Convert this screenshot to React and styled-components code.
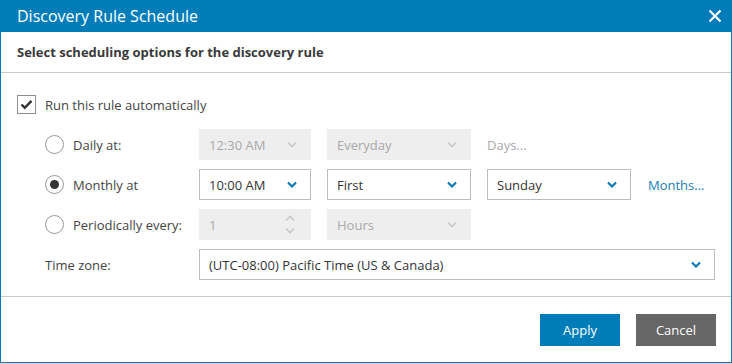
import React from "react";
import styled, { createGlobalStyle } from "styled-components";

const GlobalStyle = createGlobalStyle`
    html, body {
        margin: 0;
        padding: 0;
        background: #ffffff;
    }
    body {
        font-family: "Open Sans", "Liberation Sans", Arial, sans-serif;
    }
`;

const Dialog = styled.div`
    width: 732px;
    height: 363px;
    box-sizing: border-box;
    border: 1px solid #007db8;
    border-top: none;
    display: flex;
    flex-direction: column;
    background: #fff;
`;

const Header = styled.div`
    height: 32px;
    margin: 0 -1px;
    background: #007db8;
    color: #fff;
    display: flex;
    align-items: center;
    justify-content: space-between;
    padding: 0 10px 0 17px;
    font-size: 16px;
`;

const CloseButton = styled.button`
    border: none;
    background: none;
    padding: 0;
    width: 14px;
    height: 14px;
    display: flex;
    cursor: pointer;
`;

const SubHeader = styled.div`
    height: 40px;
    border-bottom: 1px solid #c8c8c8;
    display: flex;
    align-items: center;
    padding-left: 16px;
    font-size: 13px;
    font-weight: 700;
    color: #3a3a3a;
`;

const Body = styled.div`
    padding: 22px 15px 16px 16px;
    display: flex;
    flex-direction: column;
    border-bottom: 1px solid #c8c8c8;
`;

const CheckRow = styled.label`
    display: flex;
    align-items: center;
    gap: 9px;
    font-size: 13px;
    color: #444;
    margin-bottom: 15px;
`;

const CheckBox = styled.span`
    width: 17px;
    height: 17px;
    border: 1px solid #8f8f8f;
    display: flex;
    align-items: center;
    justify-content: center;
`;

const Options = styled.div`
    display: flex;
    flex-direction: column;
    gap: 9px;
    padding-left: 28px;
`;

const Row = styled.div`
    display: flex;
    align-items: center;
    height: 31px;
`;

const RadioLabel = styled.label`
    width: 154px;
    display: flex;
    align-items: center;
    gap: 9px;
    font-size: 13px;
    color: #444;
`;

const PlainLabel = styled.span`
    width: 154px;
    font-size: 13px;
    color: #444;
`;

const Radio = styled.span`
    width: 17px;
    height: 17px;
    border-radius: 50%;
    border: 1px solid #999;
    display: flex;
    align-items: center;
    justify-content: center;
    &::after {
        content: "";
        display: ${(p) => (p.checked ? "block" : "none")};
        width: 9px;
        height: 9px;
        border-radius: 50%;
        background: #333;
    }
`;

const Field = styled.div`
    width: ${(p) => p.width}px;
    height: 31px;
    box-sizing: border-box;
    margin-right: ${(p) => p.gap || 0}px;
    border: 1px solid ${(p) => (p.disabled ? "#eeeeee" : "#bdbdbd")};
    background: ${(p) => (p.disabled ? "#eeeeee" : "#fff")};
    color: ${(p) => (p.disabled ? "#a9a9a9" : "#333")};
    font-size: 13px;
    display: flex;
    align-items: center;
    justify-content: space-between;
    padding: 0 13px 0 9px;
`;

const Spinner = styled.span`
    display: flex;
    flex-direction: column;
    gap: 5px;
    margin-right: 2px;
`;

const LinkText = styled.a`
    font-size: 13px;
    color: ${(p) => (p.disabled ? "#a9a9a9" : "#1b7db5")};
    text-decoration: none;
    margin-left: ${(p) => p.offset || 0}px;
    cursor: pointer;
`;

const Footer = styled.div`
    flex: 1;
    display: flex;
    justify-content: flex-end;
    align-items: flex-start;
    gap: 16px;
    padding: 17px 15px 0 0;
`;

const Button = styled.button`
    width: 80px;
    height: 32px;
    border: none;
    background: ${(p) => (p.primary ? "#007db8" : "#666666")};
    color: #fff;
    font-family: inherit;
    font-size: 13px;
    cursor: pointer;
`;

const Chevron = ({ disabled, up }) => (
    <svg width="10" height="7" viewBox="0 0 10 7">
        <path
            d={up ? "M1 5.5 L5 1.5 L9 5.5" : "M1 1.5 L5 5.5 L9 1.5"}
            fill="none"
            stroke={disabled ? "#c9c9c9" : "#0a7cb4"}
            strokeWidth={disabled ? 1.6 : 2.2}
        />
    </svg>
);

const Select = ({ value, width, disabled, gap }) => (
    <Field width={width} disabled={disabled} gap={gap}>
        <span>{value}</span>
        <Chevron disabled={disabled} />
    </Field>
);

const App = () => (
    <>
        <GlobalStyle />
        <Dialog>
            <Header>
                <span>Discovery Rule Schedule</span>
                <CloseButton aria-label="Close">
                    <svg width="14" height="14" viewBox="0 0 14 14">
                        <path d="M1.5 1.5 L12.5 12.5 M12.5 1.5 L1.5 12.5" stroke="#fff" strokeWidth="2.2" />
                    </svg>
                </CloseButton>
            </Header>
            <SubHeader>Select scheduling options for the discovery rule</SubHeader>
            <Body>
                <CheckRow>
                    <CheckBox>
                        <svg width="13" height="11" viewBox="0 0 13 11">
                            <path d="M1.5 5.5 L4.8 8.8 L11.5 1.8" fill="none" stroke="#333" strokeWidth="2.4" />
                        </svg>
                    </CheckBox>
                    Run this rule automatically
                </CheckRow>
                <Options>
                    <Row>
                        <RadioLabel>
                            <Radio />
                            Daily at:
                        </RadioLabel>
                        <Select value="12:30 AM" width={112} gap={16} disabled />
                        <Select value="Everyday" width={144} gap={16} disabled />
                        <LinkText disabled>Days...</LinkText>
                    </Row>
                    <Row>
                        <RadioLabel>
                            <Radio checked />
                            Monthly at
                        </RadioLabel>
                        <Select value="10:00 AM" width={112} gap={16} />
                        <Select value="First" width={144} gap={16} />
                        <Select value="Sunday" width={144} />
                        <LinkText offset={17}>Months...</LinkText>
                    </Row>
                    <Row>
                        <RadioLabel>
                            <Radio />
                            Periodically every:
                        </RadioLabel>
                        <Field width={112} gap={16} disabled>
                            <span>1</span>
                            <Spinner>
                                <Chevron up disabled />
                                <Chevron disabled />
                            </Spinner>
                        </Field>
                        <Select value="Hours" width={144} disabled />
                    </Row>
                    <Row>
                        <PlainLabel>Time zone:</PlainLabel>
                        <Select value="(UTC-08:00) Pacific Time (US & Canada)" width={516} />
                    </Row>
                </Options>
            </Body>
            <Footer>
                <Button primary>Apply</Button>
                <Button>Cancel</Button>
            </Footer>
        </Dialog>
    </>
);

export default App;
